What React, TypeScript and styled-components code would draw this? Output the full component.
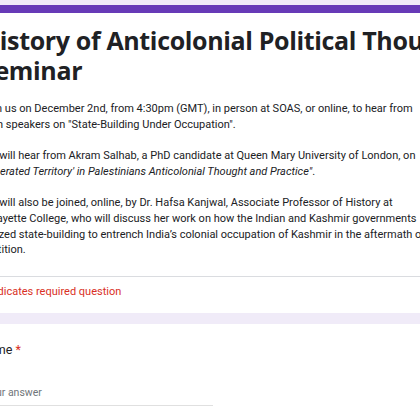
import React from "react";
import styled, { createGlobalStyle } from "styled-components";

const GlobalStyle = createGlobalStyle`
  html, body {
    margin: 0;
    padding: 0;
    background: #f0ebf8;
    overflow: hidden;
  }
  body {
    font-family: Roboto, "Liberation Sans", sans-serif;
    color: #202124;
  }
`;

const App = () => {
  return (
    <Page>
      <GlobalStyle />
      <HeaderCard>
        <Content>
          <Title>
            History of Anticolonial Political Thought
            <br />
            Seminar
          </Title>
          <Description>
            <Line>Join us on December 2nd, from 4:30pm (GMT), in person at SOAS, or online, to hear from</Line>
            <Line>both speakers on "State-Building Under Occupation".</Line>
            <Line>&nbsp;</Line>
            <Line>We will hear from Akram Salhab, a PhD candidate at Queen Mary University of London, on</Line>
            <Line>
              <em>"'Liberated Territory' in Palestinians Anticolonial Thought and Practice"</em>.
            </Line>
            <Line>&nbsp;</Line>
            <Line>We will also be joined, online, by Dr. Hafsa Kanjwal, Associate Professor of History at</Line>
            <Line>Lafayette College, who will discuss her work on how the Indian and Kashmir governments</Line>
            <Line>utilized state-building to entrench India’s colonial occupation of Kashmir in the aftermath of</Line>
            <Line>Partition.</Line>
          </Description>
        </Content>
        <Divider />
        <Required>* Indicates required question</Required>
      </HeaderCard>

      <QuestionCard>
        <QuestionTitle>
          Name <Star>*</Star>
        </QuestionTitle>
        <AnswerInput placeholder="Your answer" />
      </QuestionCard>
    </Page>
  );
};
export default App;

// the form is cropped on both sides, so the cards run past the window
const Page = styled.div`
  width: 420px;
  height: 420px;
  overflow: hidden;
  padding-top: 5px;
  box-sizing: border-box;
`;

const Card = styled.div`
  background: #ffffff;
  margin-left: -43px;
  width: 560px;
`;

const HeaderCard = styled(Card)`
  border-top: 8px solid #673ab7;
`;

const Content = styled.div`
  padding: 12px 24px 18px;
`;

const Title = styled.h1`
  margin: 0 0 16px;
  font-family: "Open Sans", "Liberation Sans", sans-serif;
  font-size: 25px;
  line-height: 30px;
  font-weight: 700;
  letter-spacing: -0.35px;
  white-space: nowrap;
  color: #202124;
`;

const Description = styled.div`
  font-size: 11px;
  line-height: 15.7px;
  color: #202124;

  em {
    font-style: italic;
  }
`;

const Line = styled.div`
  white-space: nowrap;
`;

const Divider = styled.div`
  height: 1px;
  background: #dadce0;
`;

const Required = styled.div`
  padding: 7px 24px 13px;
  font-size: 11px;
  line-height: 16px;
  color: #d93025;
`;

const QuestionCard = styled(Card)`
  margin-top: 11px;
  padding: 16px 24px 24px 22px;
  height: 120px;
`;

const QuestionTitle = styled.div`
  font-size: 12.5px;
  line-height: 20px;
  color: #202124;
`;

const Star = styled.span`
  color: #d93025;
`;

const AnswerInput = styled.input`
  display: block;
  margin-top: 25px;
  width: 229px;
  padding: 0 0 4px 5px;
  border: none;
  border-bottom: 1px solid #e0e0e0;
  outline: none;
  font-family: Roboto, "Liberation Sans", sans-serif;
  font-size: 10.5px;
  line-height: 16px;
  color: #202124;
  background: transparent;

  &::placeholder {
    color: #70757a;
  }
`;
